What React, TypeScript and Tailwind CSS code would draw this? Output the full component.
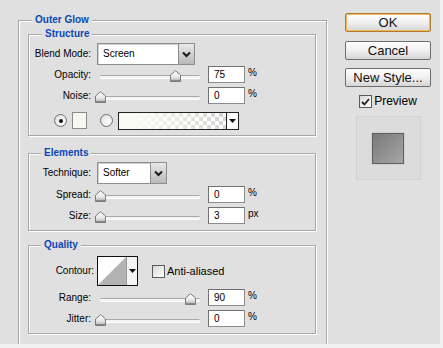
import React from "react";

const FONT = "font-['Liberation_Sans',Arial,sans-serif]";

function Legend({ children, left }: { children: React.ReactNode; left: string }) {
  return (
    <span
      className={`absolute -top-[7px] ${left} px-[3px] bg-[#e0e0e0] text-[10px] leading-[12px] font-bold text-[#0b47b6]`}
    >
      {children}
    </span>
  );
}

function Box({ className, children }: { className: string; children: React.ReactNode }) {
  return (
    <div
      className={`relative border border-[#a7a7a7] shadow-[inset_1px_1px_0_#ffffff,1px_1px_0_#ffffff] ${className}`}
    >
      {children}
    </div>
  );
}

function Label({ children, w = "w-[62px]" }: { children: React.ReactNode; w?: string }) {
  return <div className={`${w} shrink-0 text-right text-[10px] leading-[12px] text-black`}>{children}</div>;
}

function Thumb() {
  return (
    <svg width="11" height="12" viewBox="0 0 11 12">
      <defs>
        <linearGradient id="tg" x1="0" y1="0" x2="0" y2="1">
          <stop offset="0" stopColor="#ffffff" />
          <stop offset="0.6" stopColor="#e6e6e6" />
          <stop offset="1" stopColor="#a8a8a8" />
        </linearGradient>
      </defs>
      <path d="M0.5 5 L5.5 0.7 L10.5 5 V11.5 H0.5 Z" fill="url(#tg)" stroke="#7a7a7a" strokeWidth="1" />
      <path d="M1 10.5 H10" stroke="#8a8a8a" strokeWidth="1" />
    </svg>
  );
}

function Slider({ value }: { value: number }) {
  return (
    <div className="relative w-[108px] h-[17px] shrink-0">
      <div className="absolute left-[3px] top-[9px] w-[100px] h-[3px] rounded-full border-t border-[#a9a9a9] bg-[#f4f4f4] shadow-[0_1px_0_#ffffff]" />
      <div className="absolute top-[4px]" style={{ left: `${value - 2}px` }}>
        <Thumb />
      </div>
    </div>
  );
}

function NumInput({ value, unit }: { value: string; unit: string }) {
  return (
    <div className="flex items-start">
      <div className="ml-[3px] w-[37px] h-[17px] bg-white border border-[#8b8b8b] border-t-[#707070] border-l-[#707070] pl-[5px] text-[10px] leading-[15px] text-black">
        {value}
      </div>
      <div className="ml-[3px] mt-[1px] text-[10px] leading-[12px] text-black">{unit}</div>
    </div>
  );
}

function SliderRow({ label, value, num, unit, mt }: { label: string; value: number; num: string; unit: string; mt: string }) {
  return (
    <div className={`flex items-center h-[17px] ${mt}`}>
      <Label>{label}</Label>
      <div className="ml-[6px] flex items-center">
        <Slider value={value} />
        <NumInput value={num} unit={unit} />
      </div>
    </div>
  );
}

function Chevron() {
  return (
    <svg width="9" height="7" viewBox="0 0 9 7">
      <path d="M1 1.5 L4.5 5 L8 1.5" fill="none" stroke="#1a1a1a" strokeWidth="2" />
    </svg>
  );
}

function Select({ text, w }: { text: string; w: string }) {
  return (
    <div className={`ml-[6px] ${w} h-[22px] flex bg-white border border-[#8e8e8e] shadow-[inset_1px_1px_0_#cfcfcf]`}>
      <div className="flex-1 pl-[5px] text-[10px] leading-[20px] text-black">{text}</div>
      <div className="w-[16px] h-full flex items-center justify-center border-l border-[#8e8e8e] bg-[linear-gradient(#e9e9e9,#b9b9b9)]">
        <Chevron />
      </div>
    </div>
  );
}

function Radio({ checked }: { checked?: boolean }) {
  return (
    <div className="w-[13px] h-[13px] rounded-full border border-[#6f6f6f] bg-[radial-gradient(circle_at_60%_60%,#ffffff,#d9d9d9)] flex items-center justify-center">
      {checked && <div className="w-[4px] h-[4px] rounded-full bg-[#111]" />}
    </div>
  );
}

function Button({ children, primary }: { children: React.ReactNode; primary?: boolean }) {
  return (
    <div
      className={`w-[86px] h-[19px] rounded-[2px] border flex items-center justify-center text-[13px] leading-[15px] text-[#111] bg-[linear-gradient(#ffffff,#f2f2f2_45%,#d6d6d6)] ${
        primary
          ? "border-[#b07a30] shadow-[inset_0_0_0_1px_#f3b65a]"
          : "border-[#6d6d6d]"
      }`}
    >
      {children}
    </div>
  );
}

function Check({ checked }: { checked?: boolean }) {
  return (
    <div className="w-[13px] h-[13px] border border-[#5a5a5a] bg-[linear-gradient(135deg,#d8d8d8,#ffffff)] flex items-center justify-center shrink-0">
      {checked && (
        <svg width="9" height="8" viewBox="0 0 9 8">
          <path d="M1 4 L3.5 6.5 L8 1" fill="none" stroke="#222" strokeWidth="1.8" />
        </svg>
      )}
    </div>
  );
}

export default function App() {
  return (
    <div className={`w-[443px] h-[348px] bg-[#f1f1f1] ${FONT}`}>
      <div className="w-[440px] h-[344px] bg-[#e0e0e0] flex overflow-hidden">
        {/* left column */}
        <div className="pl-[18px] pt-[20px]">
          <div className="relative w-[309px] h-[330px] border border-[#a7a7a7] shadow-[inset_1px_1px_0_#ffffff,1px_1px_0_#ffffff] pl-[9px] pt-[13px]">
            <Legend left="left-[13px]">Outer Glow</Legend>

            {/* Structure */}
            <Box className="w-[288px] h-[102px]">
              <Legend left="left-[13px]">Structure</Legend>
              <div className="flex items-center h-[22px] mt-[8px]">
                <Label>Blend Mode:</Label>
                <Select text="Screen" w="w-[98px]" />
              </div>
              <SliderRow label="Opacity:" value={75} num="75" unit="%" mt="mt-[1px]" />
              <SliderRow label="Noise:" value={0} num="0" unit="%" mt="mt-[4px]" />
              <div className="flex items-center h-[17px] mt-[8px] pl-[25px]">
                <Radio checked />
                <div className="ml-[5px] w-[15px] h-[17px] border border-[#8a8a8a] bg-[#f7f7f2]" />
                <div className="ml-[13px]">
                  <Radio />
                </div>
                <div className="ml-[5px] w-[121px] h-[18px] border border-[#222] flex">
                  <div className="flex-1 bg-[image:linear-gradient(to_right,#fbfbf6_0%,#fbfbf6_10%,rgba(251,251,246,0)_95%),repeating-conic-gradient(#d6d6d6_0_25%,#ffffff_0_50%)] bg-[length:100%_100%,8px_8px]" />
                  <div className="w-[12px] border-l border-[#222] bg-white flex items-center justify-center">
                    <svg width="7" height="4" viewBox="0 0 7 4">
                      <path d="M0 0 H7 L3.5 4 Z" fill="#111" />
                    </svg>
                  </div>
                </div>
              </div>
            </Box>

            {/* Elements */}
            <Box className="w-[288px] h-[78px] mt-[17px]">
              <Legend left="left-[12px]">Elements</Legend>
              <div className="flex items-center h-[22px] mt-[8px]">
                <Label>Technique:</Label>
                <Select text="Softer" w="w-[70px]" />
              </div>
              <SliderRow label="Spread:" value={0} num="0" unit="%" mt="mt-[2px]" />
              <SliderRow label="Size:" value={0} num="3" unit="px" mt="mt-[4px]" />
            </Box>

            {/* Quality */}
            <Box className="w-[288px] h-[89px] mt-[14px]">
              <Legend left="left-[12px]">Quality</Legend>
              <div className="flex items-center h-[30px] mt-[10px]">
                <Label w="w-[65px]">Contour:</Label>
                <div className="ml-[3px] w-[41px] h-[30px] border border-[#111] flex bg-white">
                  <div className="w-[28px] h-full relative">
                    <svg className="absolute inset-0" width="28" height="28" viewBox="0 0 28 28">
                      <path d="M0 28 L28 0 V28 Z" fill="#b3b3b3" />
                    </svg>
                  </div>
                  <div className="flex-1 border-l border-[#9a9a9a] bg-[#f4f4f4] flex items-center justify-center">
                    <svg width="7" height="4" viewBox="0 0 7 4">
                      <path d="M0 0 H7 L3.5 4 Z" fill="#111" />
                    </svg>
                  </div>
                </div>
                <div className="ml-[14px] flex items-center">
                  <Check />
                  <span className="ml-[2px] text-[11px] leading-[12px] text-black">Anti-aliased</span>
                </div>
              </div>
              <SliderRow label="Range:" value={90} num="90" unit="%" mt="mt-[3px]" />
              <SliderRow label="Jitter:" value={0} num="0" unit="%" mt="mt-[4px]" />
            </Box>
          </div>
        </div>

        {/* right column */}
        <div className="ml-[18px] pt-[13px] flex flex-col items-center w-[86px]">
          <Button primary>OK</Button>
          <div className="mt-[9px]">
            <Button>Cancel</Button>
          </div>
          <div className="mt-[8px]">
            <Button>New Style...</Button>
          </div>
          <div className="mt-[8px] flex items-center h-[13px]">
            <Check checked />
            <span className="ml-[2px] text-[12px] leading-[13px] text-black">Preview</span>
          </div>
          <div className="mt-[8px] w-[65px] h-[64px] border border-[#d2d2d2] bg-[#dcdcdc] flex items-center justify-center">
            <div className="w-[32px] h-[31px] border border-[#5e5e5e] bg-[linear-gradient(135deg,#7a7a7a,#a6a6a6)] shadow-[0_0_2px_#bdbdbd]" />
          </div>
        </div>
      </div>
    </div>
  );
}
